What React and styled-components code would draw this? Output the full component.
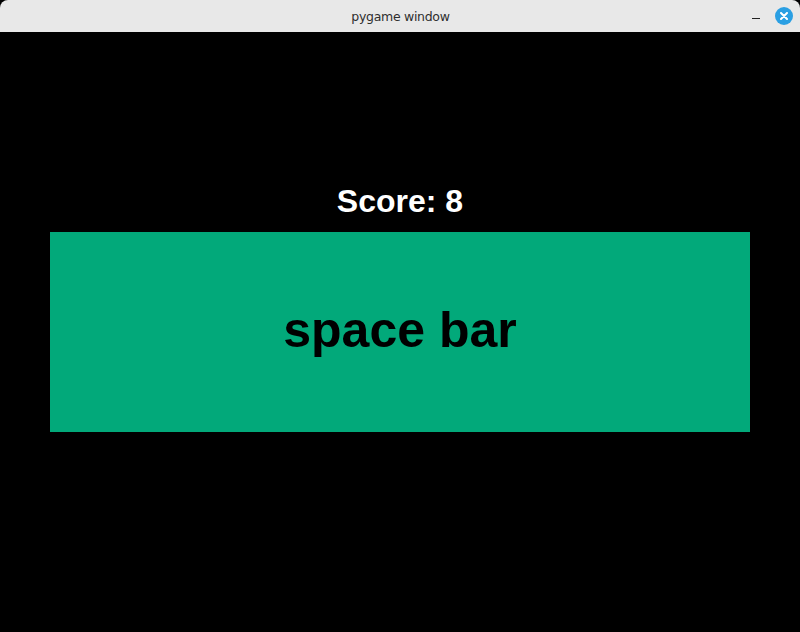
import styled, { createGlobalStyle } from "styled-components";

const GlobalStyle = createGlobalStyle`
  html, body {
    margin: 0;
    padding: 0;
    background: #000;
  }
`;

const Window = styled.div`
  width: 800px;
  height: 632px;
  display: flex;
  flex-direction: column;
  background: #000;
  overflow: hidden;
`;

const TitleBar = styled.div`
  height: 32px;
  flex-shrink: 0;
  background: #e8e8e8;
  border-radius: 8px 8px 0 0;
  display: grid;
  grid-template-columns: 1fr auto 1fr;
  align-items: center;
  padding: 0 7px 0 8px;
`;

const Title = styled.div`
  grid-column: 2;
  font-family: "DejaVu Sans", "Noto Sans", sans-serif;
  font-size: 12.5px;
  color: #2e2e2e;
  letter-spacing: -0.3px;
`;

const Controls = styled.div`
  grid-column: 3;
  justify-self: end;
  display: flex;
  align-items: center;
  gap: 15px;
`;

const Minimize = styled.div`
  width: 8px;
  height: 1px;
  background: #222;
  margin-top: 4px;
`;

const CloseButton = styled.div`
  width: 18px;
  height: 18px;
  border-radius: 50%;
  background: #2a9fe3;
  display: flex;
  align-items: center;
  justify-content: center;
`;

const Canvas = styled.div`
  flex: 1;
  display: flex;
  flex-direction: column;
  align-items: center;
  padding-top: 153px;
  gap: 15px;
`;

const Score = styled.div`
  font-family: "Liberation Sans", Arial, sans-serif;
  font-weight: bold;
  font-size: 32px;
  line-height: 32px;
  color: #fff;
`;

const KeyBox = styled.div`
  width: 700px;
  height: 200px;
  background: #02a97a;
  display: flex;
  align-items: center;
  justify-content: center;
`;

const KeyLabel = styled.div`
  font-family: "Liberation Sans", Arial, sans-serif;
  font-weight: bold;
  font-size: 50px;
  line-height: 48px;
  color: #000;
  margin-bottom: 5px;
`;

const App = () => {
  return (
    <>
      <GlobalStyle />
      <Window>
        <TitleBar>
          <Title>pygame window</Title>
          <Controls>
            <Minimize />
            <CloseButton>
              <svg width="8" height="8" viewBox="0 0 8 8">
                <path d="M1 1L7 7M7 1L1 7" stroke="#fff" strokeWidth="2" strokeLinecap="round" />
              </svg>
            </CloseButton>
          </Controls>
        </TitleBar>
        <Canvas>
          <Score>Score: 8</Score>
          <KeyBox>
            <KeyLabel>space bar</KeyLabel>
          </KeyBox>
        </Canvas>
      </Window>
    </>
  );
};

export default App;
